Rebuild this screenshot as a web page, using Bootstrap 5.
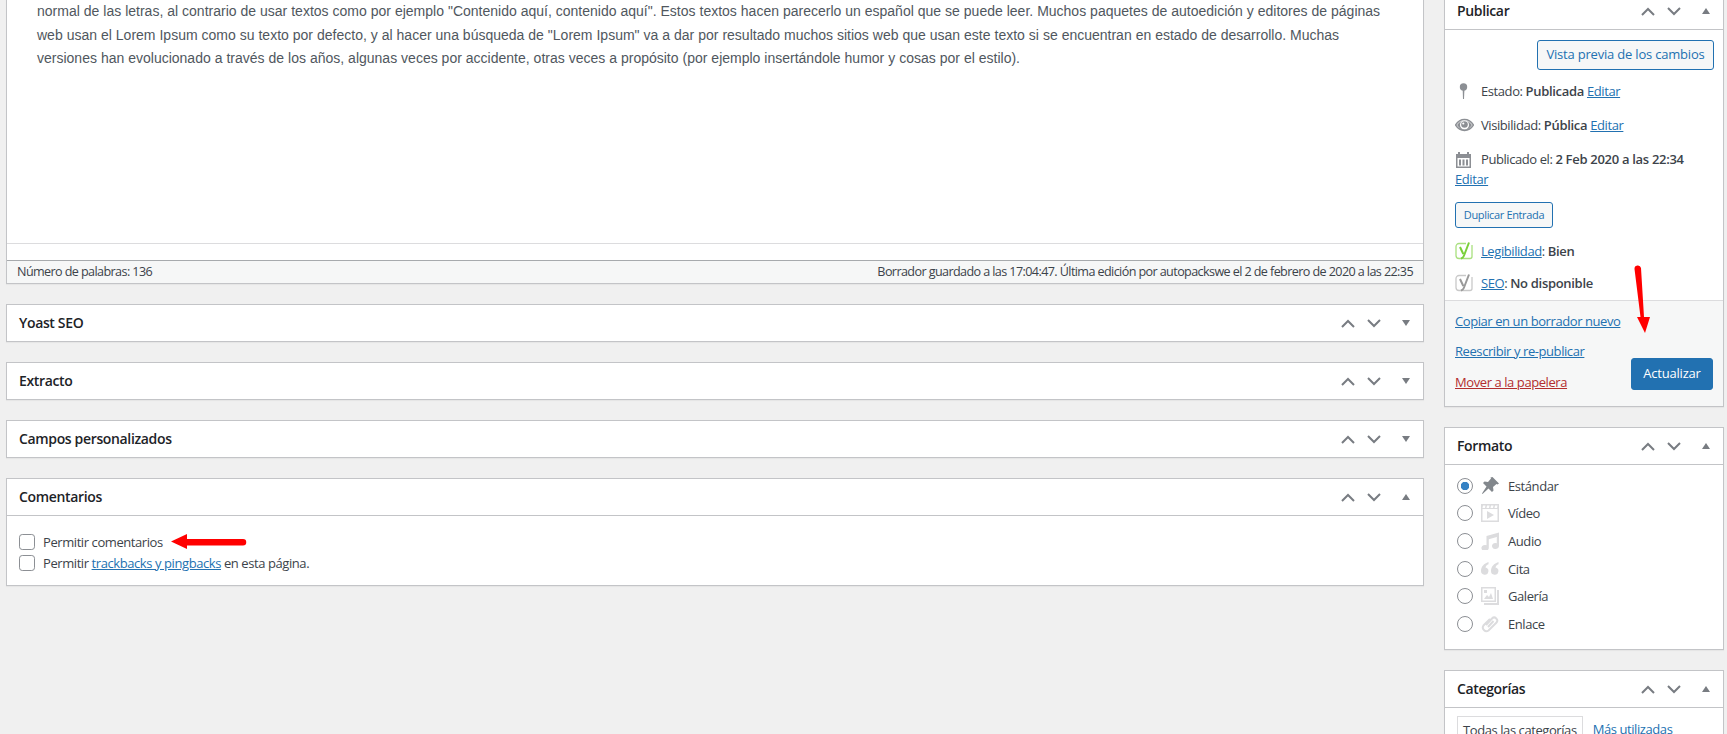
<!doctype html>
<html lang="es"><head><meta charset="utf-8"><title>Editor</title>
<link href="https://cdn.jsdelivr.net/npm/bootstrap@5.3.0/dist/css/bootstrap.min.css" rel="stylesheet">
<style>
html,body{height:734px;overflow:hidden;}
body{background:#f0f0f0;color:#3c434a;font:13px/20px "Open Sans","Noto Sans",sans-serif;letter-spacing:-.42px;}
a{color:#2271b1;}
b.fw-semibold{letter-spacing:-.3px;}
.wp-page{margin-top:-8px;padding-left:6px;gap:20px;}
.wp-main{width:1418px;flex:none;}
.wp-side{width:280px;flex:none;}
.wp-box{background:#fff;border:1px solid #c3c4c7;margin-bottom:20px;box-shadow:0 1px 1px rgba(0,0,0,.04);}
.wp-head{height:36px;padding-left:12px;}
.wp-head.is-open{height:37px;border-bottom:1px solid #c3c4c7;}
.wp-title{font-size:14px;font-weight:600;color:#1d2327;letter-spacing:-.35px;}
.wp-ctl{color:#787c82;display:flex;align-items:center;}
.wp-ctl svg{display:block;}
.wp-ctl .c1{margin-right:12px;}
.wp-ctl .c3{margin:0 13px 0 21px;}
.wp-text{height:250px;padding:7px 30px 0;font:14px/23.5px "Liberation Sans",sans-serif;color:#50575e;letter-spacing:0;white-space:nowrap;word-spacing:.07px;}
.wp-gap{height:17px;border-top:1px solid #dcdcde;}
.wp-status{height:23px;border-top:1px solid #a7aaad;background:#f6f7f7;padding:0 10px;font-size:12.6px;line-height:22px;color:#3c434a;letter-spacing:-.6px;}
.wp-comments{padding:15px 12px 12px;height:69px;}
.wp-comments .wp-line{height:21px;}
.form-check-input.wp-check{width:16px;height:16px;margin:0 8px 0 0;border-color:#8c8f94;flex:none;}
.wp-pub-btn{height:30px;width:177px;padding:0;margin:10px 0 0;font-size:13px;letter-spacing:-.2px;color:#2271b1;border:1px solid #2271b1;background:#f6f7f7;border-radius:3px;}
.wp-pub-body{padding:0 9px 0 10px;}
.wp-row{height:20px;white-space:nowrap;}
.wp-row-icon{width:26px;flex:none;color:#8c8f94;}
.wp-r1{margin-top:11px;}.wp-r2{margin-top:14px;}.wp-r3{margin-top:14px;}
.wp-r5{margin-top:13px;}.wp-r6{margin-top:12px;}
.wp-dup{height:26px;width:98px;padding:0;margin-top:13px;font-size:11px;letter-spacing:-.35px;color:#2271b1;border:1px solid #2271b1;background:#f6f7f7;border-radius:3px;display:block;}
.wp-foot{height:106px;margin-top:7px;border-top:1px solid #dcdcde;background:#f6f7f7;padding:10px 10px 0 10px;position:relative;}
.wp-foot .wp-l2{margin-top:10px;}.wp-foot .wp-l3{margin-top:11px;}
.wp-trash{color:#b32d2e;}
.wp-update{width:82px;height:32px;padding:0;margin-top:47px;background:#2271b1;border:1px solid #2271b1;color:#fff;font-size:13px;letter-spacing:-.2px;border-radius:3px;}
.wp-format{padding:7px 12px 0;height:184px;}
.wp-fmt{height:27.6px;}
.form-check-input.wp-radio{width:16px;height:16px;margin:0;border-color:#8c8f94;flex:none;}
.form-check-input.wp-radio:checked{background-color:#fff;border-color:#8c8f94;background-image:radial-gradient(circle,#3582c4 0 4px,transparent 4.5px);}
.wp-fmt svg{margin:0 9px 0 8px;flex:none;}
.wp-ico-off{color:#dcdcde;}.wp-ico-on{color:#82878c;}
.wp-cats{padding:8px 12px 0;height:60px;}
.wp-tab{border:1px solid #dcdcde;border-bottom:0;padding:3px 5px;height:30px;}
.wp-tab2{padding:3px 10px;color:#2271b1;}
.wp-arrow{position:absolute;pointer-events:none;z-index:5;}
</style></head>
<body>
<svg class="d-none" xmlns="http://www.w3.org/2000/svg">
<symbol id="up" viewBox="0 0 14 9"><path d="M1 8 7 2l6 6" fill="none" stroke="currentColor" stroke-width="2"/></symbol>
<symbol id="down" viewBox="0 0 14 9"><path d="M1 1l6 6 6-6" fill="none" stroke="currentColor" stroke-width="2"/></symbol>
<symbol id="tup" viewBox="0 0 8 6"><path d="M4 0l4 6H0z" fill="currentColor"/></symbol>
<symbol id="tdown" viewBox="0 0 8 6"><path d="M0 0h8L4 6z" fill="currentColor"/></symbol>
</svg>
<div class="wp-page d-flex">
<main class="wp-main">
  <section class="wp-box">
    <div class="wp-text">normal de las letras, al contrario de usar textos como por ejemplo "Contenido aquí, contenido aquí". Estos textos hacen parecerlo un español que se puede leer. Muchos paquetes de autoedición y editores de páginas<br>web usan el Lorem Ipsum como su texto por defecto, y al hacer una búsqueda de "Lorem Ipsum" va a dar por resultado muchos sitios web que usan este texto si se encuentran en estado de desarrollo. Muchas<br>versiones han evolucionado a través de los años, algunas veces por accidente, otras veces a propósito (por ejemplo insertándole humor y cosas por el estilo).</div>
    <div class="wp-gap"></div>
    <div class="wp-status d-flex justify-content-between"><span>Número de palabras: 136</span><span>Borrador guardado a las 17:04:47. Última edición por autopackswe el 2 de febrero de 2020 a las 22:35</span></div>
  </section>
  <section class="wp-box"><div class="wp-head d-flex justify-content-between align-items-center"><span class="wp-title">Yoast SEO</span><span class="wp-ctl"><svg class="c1" width="14" height="9"><use href="#up"/></svg><svg width="14" height="9"><use href="#down"/></svg><svg class="c3" width="8" height="6"><use href="#tdown"/></svg></span></div></section>
  <section class="wp-box"><div class="wp-head d-flex justify-content-between align-items-center"><span class="wp-title">Extracto</span><span class="wp-ctl"><svg class="c1" width="14" height="9"><use href="#up"/></svg><svg width="14" height="9"><use href="#down"/></svg><svg class="c3" width="8" height="6"><use href="#tdown"/></svg></span></div></section>
  <section class="wp-box"><div class="wp-head d-flex justify-content-between align-items-center"><span class="wp-title">Campos personalizados</span><span class="wp-ctl"><svg class="c1" width="14" height="9"><use href="#up"/></svg><svg width="14" height="9"><use href="#down"/></svg><svg class="c3" width="8" height="6"><use href="#tdown"/></svg></span></div></section>
  <section class="wp-box">
    <div class="wp-head is-open d-flex justify-content-between align-items-center"><span class="wp-title">Comentarios</span><span class="wp-ctl"><svg class="c1" width="14" height="9"><use href="#up"/></svg><svg width="14" height="9"><use href="#down"/></svg><svg class="c3" width="8" height="6"><use href="#tup"/></svg></span></div>
    <div class="wp-comments position-relative">
      <div class="wp-line d-flex align-items-center"><input class="form-check-input wp-check" type="checkbox" aria-label="Permitir comentarios"><span>Permitir comentarios</span></div>
      <div class="wp-line d-flex align-items-center"><input class="form-check-input wp-check" type="checkbox" aria-label="Permitir trackbacks"><span>Permitir <a href="#">trackbacks y pingbacks</a> en esta página.</span></div>
      <svg class="wp-arrow" style="left:164px;top:17px" width="76" height="17" viewBox="0 0 76 17"><path d="M0 8.500 16 1v5h56a3 3 0 0 1 0 6.500H16V16z" fill="#f00"/></svg>
    </div>
  </section>
</main>
<aside class="wp-side">
  <section class="wp-box">
    <div class="wp-head is-open d-flex justify-content-between align-items-center"><span class="wp-title">Publicar</span><span class="wp-ctl"><svg class="c1" width="14" height="9"><use href="#up"/></svg><svg width="14" height="9"><use href="#down"/></svg><svg class="c3" width="8" height="6"><use href="#tup"/></svg></span></div>
    <div class="wp-pub-body">
      <div class="d-flex justify-content-end"><button class="btn wp-pub-btn" type="button">Vista previa de los cambios</button></div>
      <div class="wp-row wp-r1 d-flex align-items-center"><span class="wp-row-icon"><svg width="18" height="20" viewBox="0 0 18 20" class="d-block"><circle cx="8.500" cy="6" r="3.700" fill="#8c8f94"/><path d="M7.700 9h1.700l-.4 9H8z" fill="#8c8f94"/></svg></span><span>Estado: <b class="fw-semibold">Publicada</b> <a href="#">Editar</a></span></div>
      <div class="wp-row wp-r2 d-flex align-items-center"><span class="wp-row-icon"><svg width="19" height="14" viewBox="0 0 19 14" class="d-block"><path d="M.5 7C3 3 6 1.500 9.500 1.500S16 3 18.500 7c-2.500 4-5.500 5.500-9 5.500S3 11 .5 7z" fill="none" stroke="#8c8f94" stroke-width="1.500"/><path d="M2 7c1.500-2 3-3.500 5-4.300A5 5 0 0 0 5 7a4.500 4.500 0 0 0 9 0 5 5 0 0 0-2-4.300c2 .8 3.500 2.300 5 4.300-2 3-4.500 5-7.500 5S4 10 2 7z" fill="#8c8f94"/><circle cx="9.500" cy="6.500" r="3.300" fill="#8c8f94"/><circle cx="8.300" cy="5.500" r="1.100" fill="#fff"/></svg></span><span>Visibilidad: <b class="fw-semibold">Pública</b> <a href="#">Editar</a></span></div>
      <div class="wp-row wp-r3 d-flex align-items-center"><span class="wp-row-icon"><svg width="17" height="17" viewBox="0 0 17 17" class="d-block"><path d="M1 3h2V1h2v2h7V1h2v2h2v14H1zM2.500 7v8.500h12V7z" fill="#8c8f94"/><path d="M4 8.500h2v6H4zM7.500 8.500h2v6h-2zM11 8.500h2v6h-2z" fill="#8c8f94"/></svg></span><span>Publicado el: <b class="fw-semibold">2 Feb 2020 a las 22:34</b></span></div>
      <div class="wp-row"><a href="#">Editar</a></div>
      <button class="btn wp-dup" type="button">Duplicar Entrada</button>
      <div class="wp-row wp-r5 d-flex align-items-center"><span class="wp-row-icon"><svg width="18" height="18" viewBox="0 0 18 18" class="d-block"><path d="M11 1.500H4A3 3 0 0 0 1 4.500v9a3 3 0 0 0 3 3h11a2 2 0 0 0 2-2V3" fill="none" stroke="#a9e07f" stroke-width="1.300"/><path d="M5 5l3.300 7M14 .5 8.800 14c-.4 1-1 2-2.800 2.500" fill="none" stroke="#7ad03a" stroke-width="2"/></svg></span><span><a href="#">Legibilidad</a>: <b class="fw-semibold">Bien</b></span></div>
      <div class="wp-row wp-r6 d-flex align-items-center"><span class="wp-row-icon"><svg width="18" height="18" viewBox="0 0 18 18" class="d-block"><path d="M11 1.500H4A3 3 0 0 0 1 4.500v9a3 3 0 0 0 3 3h11a2 2 0 0 0 2-2V3" fill="none" stroke="#c9c9c9" stroke-width="1.300"/><path d="M5 5l3.300 7M14 .5 8.800 14c-.4 1-1 2-2.800 2.500" fill="none" stroke="#999" stroke-width="2"/></svg></span><span><a href="#">SEO</a>: <b class="fw-semibold">No disponible</b></span></div>
    </div>
    <div class="wp-foot d-flex justify-content-between">
      <div><div><a href="#">Copiar en un borrador nuevo</a></div><div class="wp-l2"><a href="#">Reescribir y re-publicar</a></div><div class="wp-l3"><a href="#" class="wp-trash">Mover a la papelera</a></div></div>
      <button class="btn wp-update" type="button">Actualizar</button>
      <svg class="wp-arrow" style="left:188px;top:-36px" width="20" height="70" viewBox="0 0 20 70"><path d="M1.500 4a3.300 3.300 0 0 1 6.500-1L11 52h6l-5 16-8-16h3.500z" fill="#f00"/></svg>
    </div>
  </section>
  <section class="wp-box">
    <div class="wp-head is-open d-flex justify-content-between align-items-center"><span class="wp-title">Formato</span><span class="wp-ctl"><svg class="c1" width="14" height="9"><use href="#up"/></svg><svg width="14" height="9"><use href="#down"/></svg><svg class="c3" width="8" height="6"><use href="#tup"/></svg></span></div>
    <div class="wp-format">
      <div class="wp-fmt d-flex align-items-center"><input class="form-check-input wp-radio" type="radio" name="fmt" checked aria-label="Estándar"><svg class="wp-ico-on" width="18" height="18" viewBox="0 0 18 18"><path d="M11.500 0 18 6.500l-1.500 1-1-.5-3.500 3 .5 3.500-1.500 1.500-3.500-3.500L1.500 17 1 16.500l4.500-7L2 6l1.500-1.500L7 5l3-3.500-.5-1z" fill="currentColor"/></svg><span>Estándar</span></div>
      <div class="wp-fmt d-flex align-items-center"><input class="form-check-input wp-radio" type="radio" name="fmt" aria-label="Vídeo"><svg class="wp-ico-off" width="18" height="18" viewBox="0 0 18 18"><path d="M0 0h18v18H0zM1.500 5v11.500h15V5zM2 1.500 1.500 4H4l.5-2.500zm4 0L5.500 4H8l.5-2.500zm4 0L9.500 4H12l.5-2.500zm4 0L13.500 4H16l.5-2.500zM6 7l7 4-7 4z" fill="currentColor" fill-rule="evenodd"/></svg><span>Vídeo</span></div>
      <div class="wp-fmt d-flex align-items-center"><input class="form-check-input wp-radio" type="radio" name="fmt" aria-label="Audio"><svg class="wp-ico-off" width="18" height="18" viewBox="0 0 18 18"><path d="M5.500 4 18 .5V14a3.500 3 0 1 1-2.200-2.800V5L7.800 7.200V16A3.700 3 0 1 1 5.500 13.200z" fill="currentColor"/></svg><span>Audio</span></div>
      <div class="wp-fmt d-flex align-items-center"><input class="form-check-input wp-radio" type="radio" name="fmt" aria-label="Cita"><svg class="wp-ico-off" width="18" height="18" viewBox="0 0 18 18"><path d="M7.500 2C3 3.500 0 6.500 0 11a3.700 3.700 0 1 0 4.500-3.600C4.800 6 5.800 5 7.500 4.300zM17.500 2C13 3.500 10 6.500 10 11a3.700 3.700 0 1 0 4.500-3.600c.3-1.400 1.300-2.400 3-3.100z" fill="currentColor"/></svg><span>Cita</span></div>
      <div class="wp-fmt d-flex align-items-center"><input class="form-check-input wp-radio" type="radio" name="fmt" aria-label="Galería"><svg class="wp-ico-off" width="18" height="18" viewBox="0 0 18 18"><path d="M0 0h15v15H0zM1.500 1.500v12h12v-12zM3 12l3-4 2 2 2-4 2 6zM3 3h3v3H3zM16 3h2v15H3v-2h13z" fill="currentColor" fill-rule="evenodd"/></svg><span>Galería</span></div>
      <div class="wp-fmt d-flex align-items-center"><input class="form-check-input wp-radio" type="radio" name="fmt" aria-label="Enlace"><svg class="wp-ico-off" width="18" height="18" viewBox="0 0 18 18"><path d="M5 10l6-6.500a3 3 0 0 1 4.300 4.200L7.500 15.500a3.600 3.600 0 0 1-5-5L9 4M7 12l5.500-6" fill="none" stroke="currentColor" stroke-width="2"/></svg><span>Enlace</span></div>
    </div>
  </section>
  <section class="wp-box">
    <div class="wp-head is-open d-flex justify-content-between align-items-center"><span class="wp-title">Categorías</span><span class="wp-ctl"><svg class="c1" width="14" height="9"><use href="#up"/></svg><svg width="14" height="9"><use href="#down"/></svg><svg class="c3" width="8" height="6"><use href="#tup"/></svg></span></div>
    <div class="wp-cats d-flex"><span class="wp-tab">Todas las categorías</span><span class="wp-tab2">Más utilizadas</span></div>
  </section>
</aside>
</div>
</body></html>
